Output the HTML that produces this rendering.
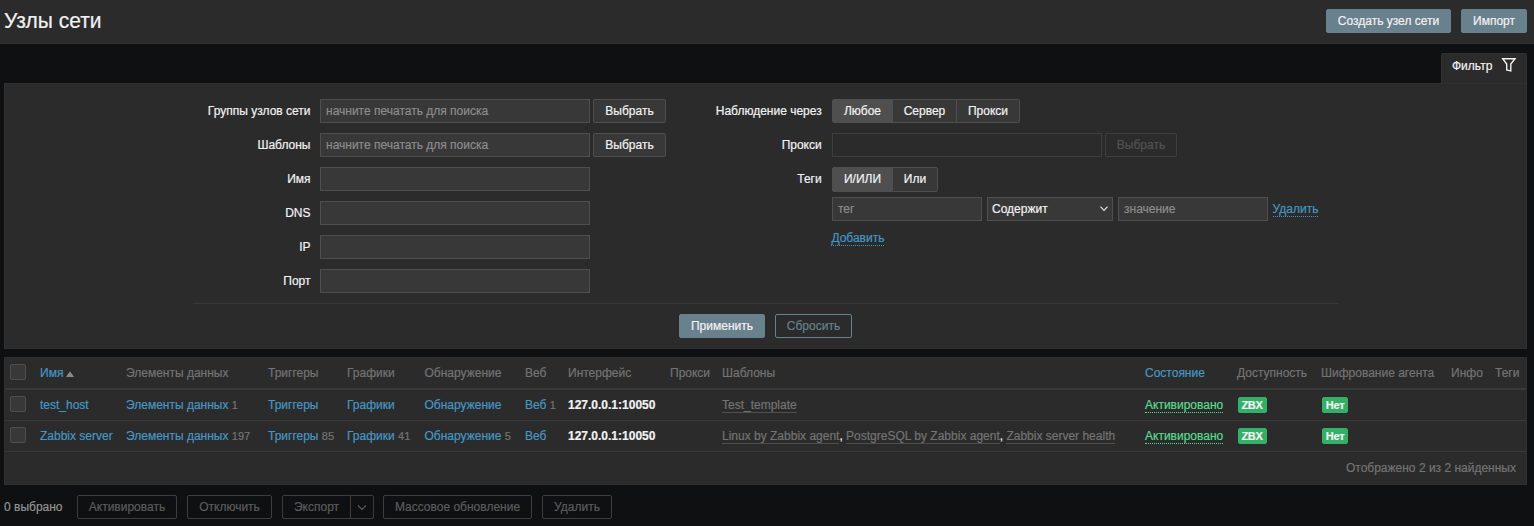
<!DOCTYPE html>
<html lang="ru">
<head>
<meta charset="utf-8">
<title>Узлы сети</title>
<style>
*{box-sizing:border-box;margin:0;padding:0}
html,body{width:1534px;height:526px;overflow:hidden}
body{background:#0e1012;color:#f2f2f2;font-family:"Liberation Sans",Arial,sans-serif;font-size:12px;line-height:14px;position:relative;-webkit-text-stroke:0.2px}
.abs{position:absolute}
.hdr{left:0;top:0;width:1534px;height:44px;background:#2b2b2b;border-bottom:1px solid #303030}
h1{position:absolute;left:4px;top:8px;font-size:21px;line-height:26px;font-weight:400;color:#f2f2f2;white-space:nowrap;transform:scaleY(1.065);transform-origin:0 20.300px}
.btn{position:absolute;height:24px;line-height:22px;border:1px solid #69808d;background:#69808d;color:#f2f2f2;border-radius:2px;text-align:center;white-space:nowrap}
.btn.alt{background:transparent;color:#69808d}
.btn.grey{background:#383838;border-color:#4f4f4f;color:#f2f2f2}
.btn.dis{background:transparent;border-color:#3d3d3d;color:#525252}
.btn.dis2{background:transparent;border-color:#3d3d3d;color:#5c5c5c}
.tab{left:1441px;top:53px;width:86px;height:31px;background:#2b2b2b;border-radius:2px 2px 0 0;border:1px solid #303030;border-bottom:0}
.panel{left:4px;top:83px;width:1523px;height:266px;background:#2b2b2b;border:1px solid #303030}
.lbl{position:absolute;text-align:right;white-space:nowrap;line-height:24px;height:24px}
.inp{position:absolute;height:24px;background:#383838;border:1px solid #4f4f4f;color:#8c8c8c;line-height:22px;padding-left:5px;white-space:nowrap;overflow:hidden}
.inp.dis{background:#2b2b2b;border-color:#3d3d3d}
.seg{position:absolute;height:24px;line-height:22px;border:1px solid #4f4f4f;background:#383838;text-align:center;color:#f2f2f2;white-space:nowrap}
.seg.on{background:#4f4f4f}
.seg.l{border-radius:2px 0 0 2px}
.seg.r{border-radius:0 2px 2px 0}
a,.lnk{color:#4796c4;text-decoration:none}
.dot{border-bottom:1px dotted #4796c4}
.tbl{left:4px;top:357px;width:1523px;height:128px;background:#2b2b2b;border:1px solid #303030}
.t{position:absolute;white-space:nowrap;line-height:14px}
.grey{color:#737373}
.cb{position:absolute;width:16px;height:16px;border:1px solid #4f4f4f;background:#383838;border-radius:2px}
.hl{position:absolute;left:5px;width:1521px;background:#383838}
.alt2{color:#737373;border-bottom:1px solid rgba(115,115,115,.5)}
.green{color:#59db8f;border-bottom:1px dotted #59db8f}
.st{position:absolute;height:16px;line-height:14px;background:#34af67;border:1px solid #34af67;color:#f2f2f2;font-size:11px;font-weight:700;border-radius:2px;text-align:center;padding:0;letter-spacing:-0.25px}
</style>
</head>
<body>
<div class="abs hdr"></div>
<h1>Узлы сети</h1>
<div class="btn" style="left:1326px;top:9px;width:125px">Создать узел сети</div>
<div class="btn" style="left:1461px;top:9px;width:66px">Импорт</div>

<div class="abs tab"></div>
<div class="t" style="left:1452px;top:59px">Фильтр</div>
<svg class="abs" style="left:1500px;top:57px" width="18" height="18" viewBox="0 0 18 18"><path d="M2.7 1.7H15L10.8 7V13.9L6.7 13V7Z" fill="none" stroke="#f2f2f2" stroke-width="1.4" stroke-linejoin="miter"/></svg>

<div class="abs panel"></div>

<!-- left column -->
<div class="lbl" style="left:110.500px;width:200px;top:99px">Группы узлов сети</div>
<div class="inp" style="left:320px;top:99px;width:270px">начните печатать для поиска</div>
<div class="btn grey" style="left:593px;top:99px;width:73px">Выбрать</div>

<div class="lbl" style="left:110.500px;width:200px;top:133px">Шаблоны</div>
<div class="inp" style="left:320px;top:133px;width:270px">начните печатать для поиска</div>
<div class="btn grey" style="left:593px;top:133px;width:73px">Выбрать</div>

<div class="lbl" style="left:110.500px;width:200px;top:167px">Имя</div>
<div class="inp" style="left:320px;top:167px;width:270px"></div>
<div class="lbl" style="left:110.500px;width:200px;top:201px">DNS</div>
<div class="inp" style="left:320px;top:201px;width:270px"></div>
<div class="lbl" style="left:110.500px;width:200px;top:235px">IP</div>
<div class="inp" style="left:320px;top:235px;width:270px"></div>
<div class="lbl" style="left:110.500px;width:200px;top:269px">Порт</div>
<div class="inp" style="left:320px;top:269px;width:270px"></div>

<!-- right column -->
<div class="lbl" style="left:621.700px;width:200px;top:99px">Наблюдение через</div>
<div class="seg on l" style="left:832px;top:99px;width:61px">Любое</div>
<div class="seg" style="left:892px;top:99px;width:65px">Сервер</div>
<div class="seg r" style="left:956px;top:99px;width:64px">Прокси</div>

<div class="lbl" style="left:621.700px;width:200px;top:133px">Прокси</div>
<div class="inp dis" style="left:832px;top:133px;width:270px"></div>
<div class="btn dis" style="left:1105px;top:133px;width:72px">Выбрать</div>

<div class="lbl" style="left:621.700px;width:200px;top:167px">Теги</div>
<div class="seg on l" style="left:832px;top:167px;width:61px;height:25px">И/ИЛИ</div>
<div class="seg r" style="left:892px;top:167px;width:46px;height:25px">Или</div>

<div class="inp" style="left:832px;top:197px;width:150px">тег</div>
<div class="inp" style="left:987px;top:197px;width:126px;color:#f2f2f2;padding-left:4px">Содержит</div>
<svg class="abs" style="left:1100px;top:206px" width="8" height="6" viewBox="0 0 8 6"><path d="M0.400 0.600L4 4.500L7.600 0.600" fill="none" stroke="#e4e4e4" stroke-width="1.15"/></svg>
<div class="inp" style="left:1118px;top:197px;width:150px">значение</div>
<div class="t lnk" style="left:1272.600px;top:202px"><span class="dot">Удалить</span></div>
<div class="t lnk" style="left:831.400px;top:231px"><span class="dot">Добавить</span></div>

<div class="abs" style="left:193px;top:303px;width:1145px;height:1px;background:#383838"></div>
<div class="btn" style="left:679px;top:314px;width:86px">Применить</div>
<div class="btn alt" style="left:775px;top:314px;width:77px">Сбросить</div>

<!-- table -->
<div class="abs tbl"></div>
<div class="cb" style="left:10px;top:364px"></div>
<div class="t lnk" style="left:40px;top:366px">Имя</div>
<svg class="abs" style="left:66px;top:371px" width="8" height="6" viewBox="0 0 8 6"><path d="M0 6L4 0.300L8 6z" fill="#8a8a8a"/></svg>
<div class="t grey" style="left:126px;top:366px">Элементы данных</div>
<div class="t grey" style="left:268px;top:366px">Триггеры</div>
<div class="t grey" style="left:347px;top:366px">Графики</div>
<div class="t grey" style="left:424.5px;top:366px">Обнаружение</div>
<div class="t grey" style="left:525px;top:366px">Веб</div>
<div class="t grey" style="left:568px;top:366px">Интерфейс</div>
<div class="t grey" style="left:670px;top:366px">Прокси</div>
<div class="t grey" style="left:722px;top:366px">Шаблоны</div>
<div class="t lnk" style="left:1145px;top:366px">Состояние</div>
<div class="t grey" style="left:1237px;top:366px">Доступность</div>
<div class="t grey" style="left:1321px;top:366px">Шифрование агента</div>
<div class="t grey" style="left:1451px;top:366px">Инфо</div>
<div class="t grey" style="left:1495px;top:366px">Теги</div>
<div class="hl" style="top:388px;height:2px"></div>

<!-- row 1 -->
<div class="cb" style="left:10px;top:396px"></div>
<div class="t lnk" style="left:40px;top:398px">test_host</div>
<div class="t" style="left:126px;top:398px"><span class="lnk">Элементы данных</span> <span class="grey" style="font-size:11px">1</span></div>
<div class="t lnk" style="left:268px;top:398px">Триггеры</div>
<div class="t lnk" style="left:347px;top:398px">Графики</div>
<div class="t lnk" style="left:424.5px;top:398px">Обнаружение</div>
<div class="t" style="left:525px;top:398px"><span class="lnk">Веб</span> <span class="grey" style="font-size:11px">1</span></div>
<div class="t" style="left:568px;top:398px;font-weight:700">127.0.0.1:10050</div>
<div class="t" style="left:722px;top:398px"><span class="alt2">Test_template</span></div>
<div class="t" style="left:1145px;top:398px"><span class="green">Активировано</span></div>
<div class="st" style="left:1238px;top:397px;width:29px;padding-right:1px">ZBX</div>
<div class="st" style="left:1322px;top:397px;width:26px">Нет</div>
<div class="hl" style="top:420px;height:1px"></div>

<!-- row 2 -->
<div class="cb" style="left:10px;top:427px"></div>
<div class="t lnk" style="left:40px;top:429px">Zabbix server</div>
<div class="t" style="left:126px;top:429px"><span class="lnk">Элементы данных</span> <span class="grey" style="font-size:11px">197</span></div>
<div class="t" style="left:268px;top:429px"><span class="lnk">Триггеры</span> <span class="grey" style="font-size:11px">85</span></div>
<div class="t" style="left:347px;top:429px"><span class="lnk">Графики</span> <span class="grey" style="font-size:11px">41</span></div>
<div class="t" style="left:424.5px;top:429px"><span class="lnk">Обнаружение</span> <span class="grey" style="font-size:11px">5</span></div>
<div class="t lnk" style="left:525px;top:429px">Веб</div>
<div class="t" style="left:568px;top:429px;font-weight:700">127.0.0.1:10050</div>
<div class="t" style="left:722px;top:429px"><span class="alt2">Linux by Zabbix agent</span>, <span class="alt2">PostgreSQL by Zabbix agent</span>, <span class="alt2">Zabbix server health</span></div>
<div class="t" style="left:1145px;top:429px"><span class="green">Активировано</span></div>
<div class="st" style="left:1238px;top:428px;width:29px;padding-right:1px">ZBX</div>
<div class="st" style="left:1322px;top:428px;width:26px">Нет</div>
<div class="hl" style="top:451px;height:1px"></div>

<div class="t grey" style="right:18px;top:461px">Отображено 2 из 2 найденных</div>

<!-- footer actions -->
<div class="t" style="left:4px;top:500px;color:#939393">0 выбрано</div>
<div class="btn dis2" style="left:77px;top:495px;width:100px">Активировать</div>
<div class="btn dis2" style="left:187px;top:495px;width:85px">Отключить</div>
<div class="btn dis2" style="left:282px;top:495px;width:69px;border-radius:2px 0 0 2px">Экспорт</div>
<div class="btn dis2" style="left:350px;top:495px;width:24px;border-radius:0 2px 2px 0"></div>
<svg class="abs" style="left:356px;top:504px" width="12" height="8" viewBox="0 0 12 8"><path d="M2 1.500l4 4 4-4" fill="none" stroke="#5c5c5c" stroke-width="1.1"/></svg>
<div class="btn dis2" style="left:383px;top:495px;width:149px">Массовое обновление</div>
<div class="btn dis2" style="left:542px;top:495px;width:70px">Удалить</div>
</body>
</html>
